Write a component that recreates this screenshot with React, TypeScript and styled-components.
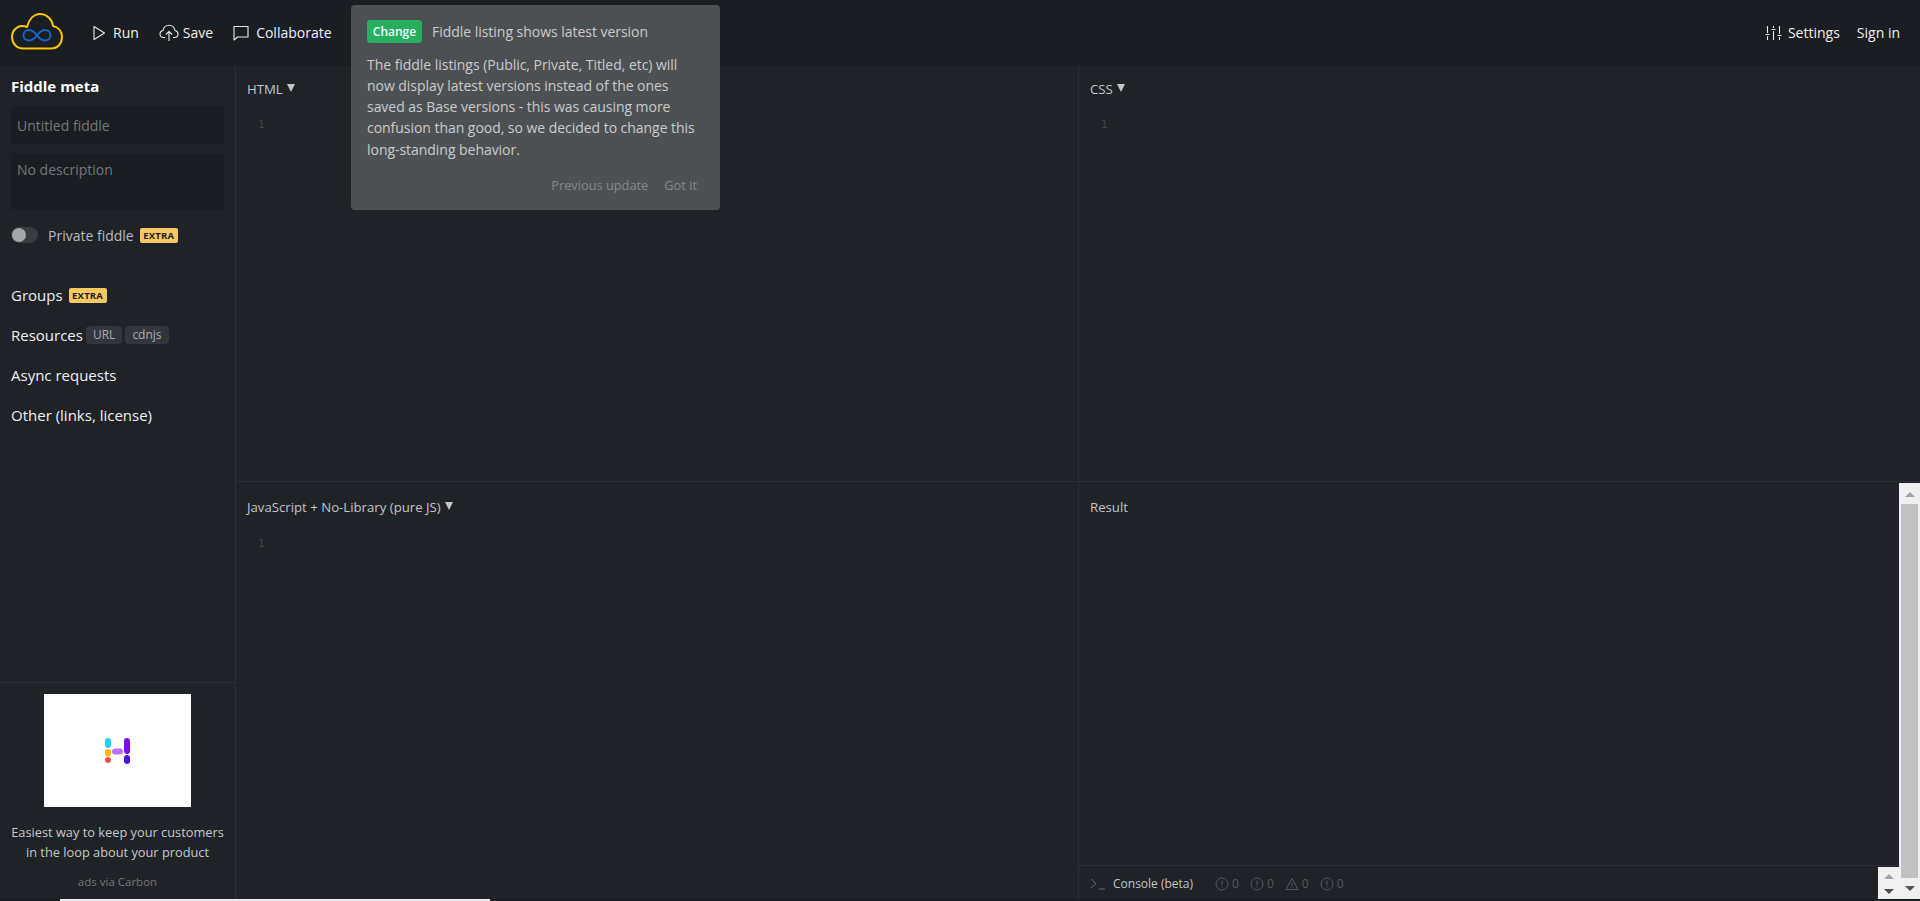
import React from "react"
import styled, { createGlobalStyle } from "styled-components"

const GlobalStyle = createGlobalStyle`
  html, body {
    margin: 0;
    padding: 0;
    height: 100%;
    overflow: hidden;
    background: #1f2227;
    font-family: "Open Sans", "Liberation Sans", sans-serif;
  }
  * {
    box-sizing: border-box;
  }
`

const Page = styled.div`
  position: relative;
  width: 1920px;
  height: 901px;
  display: flex;
  flex-direction: column;
  overflow: hidden;
  background: #1f2227;
`
const Header = styled.header`
  height: 66px;
  flex: none;
  display: flex;
  align-items: center;
  justify-content: space-between;
  padding: 0 20px 0 11px;
  background: #1a1d22;
`
const HeaderGroup = styled.nav`
  display: flex;
  align-items: center;
`
const Logo = styled.svg`
  width: 52px;
  height: 37px;
  margin: 0 29px 3px 0;
`
const NavItem = styled.a<{ $gap?: number; $left?: number }>`
  display: flex;
  align-items: center;
  gap: ${(p) => p.$gap ?? 7}px;
  margin-left: ${(p) => p.$left ?? 0}px;
  color: #f0f0f0;
  font-size: 14px;
  line-height: 20px;
  white-space: nowrap;
`
const Body = styled.div`
  flex: 1;
  min-height: 0;
  display: flex;
`
const Sidebar = styled.aside`
  width: 236px;
  flex: none;
  display: flex;
  flex-direction: column;
  border-right: 1px solid #2c2f35;
`
const Meta = styled.section`
  flex: 1;
  padding: 10px 11px 0;
`
const MetaTitle = styled.h3`
  margin: 0 0 10px;
  color: #ffffff;
  font-size: 15px;
  line-height: 20px;
  font-weight: 700;
`
const TextField = styled.div<{ $tall?: boolean }>`
  width: 213px;
  height: ${(p) => (p.$tall ? 57 : 38)}px;
  margin-bottom: ${(p) => (p.$tall ? 16 : 9)}px;
  padding: ${(p) => (p.$tall ? 7 : 10)}px 6px;
  background: #1a1d22;
  border-radius: 4px;
  color: #75787b;
  font-size: 14px;
  line-height: 20px;
`
const PrivateRow = styled.div`
  display: flex;
  align-items: center;
  height: 18px;
  margin-bottom: 41px;
  color: #b9bbbd;
  font-size: 14px;
`
const Toggle = styled.span`
  position: relative;
  width: 27px;
  height: 16px;
  margin-right: 10px;
  border-radius: 8px;
  background: #383b41;
  &::after {
    content: "";
    position: absolute;
    left: 1px;
    top: 1px;
    width: 14px;
    height: 14px;
    border-radius: 50%;
    background: #a5a6a8;
  }
`
const ExtraBadge = styled.span`
  display: inline-block;
  margin-left: 6px;
  padding: 0 3.5px;
  height: 15px;
  border-radius: 2px;
  background: #f5c862;
  color: #1f2227;
  font-size: 9.5px;
  line-height: 15px;
  font-weight: 700;
  letter-spacing: 0.2px;
`
const SectionLink = styled.div`
  display: flex;
  align-items: center;
  height: 20px;
  margin-bottom: 20px;
  color: #f0f0f0;
  font-size: 15px;
  line-height: 20px;
`
const SourceTag = styled.span`
  height: 18px;
  margin-left: 3px;
  padding: 0 7px;
  border-radius: 4px;
  background: #33363c;
  color: #a9abae;
  font-size: 12px;
  line-height: 18px;
`
const Ad = styled.section`
  height: 217px;
  flex: none;
  display: flex;
  flex-direction: column;
  align-items: center;
  padding-top: 11px;
  border-top: 1px solid #2c2f35;
`
const AdImage = styled.div`
  width: 147px;
  height: 113px;
  display: flex;
  align-items: center;
  justify-content: center;
  background: #ffffff;
`
const AdText = styled.p`
  margin: 15px 0 0;
  color: #c6c8ca;
  font-size: 12.8px;
  line-height: 20px;
  text-align: center;
`
const AdSource = styled.span`
  margin-top: 12px;
  color: #75787c;
  font-size: 11.5px;
  line-height: 16px;
`
const Editors = styled.main`
  flex: 1;
  display: grid;
  grid-template-columns: 843px 1fr;
  grid-template-rows: 416px 1fr;
`
const Panel = styled.section<{ $right?: boolean; $bottom?: boolean }>`
  position: relative;
  display: flex;
  flex-direction: column;
  border-right: ${(p) => (p.$right ? "0" : "1px solid #2c2f35")};
  border-bottom: ${(p) => (p.$bottom ? "0" : "1px solid #2c2f35")};
`
const PanelTitle = styled.div<{ $bottom?: boolean }>`
  display: flex;
  align-items: center;
  gap: 4px;
  height: 18px;
  margin: ${(p) => (p.$bottom ? 16 : 14)}px 0 0 11px;
  color: #c3c5c7;
  font-size: 13.2px;
  line-height: 18px;
`
const Caret = styled.span`
  width: 0;
  height: 0;
  margin-bottom: 3px;
  border-left: 4.5px solid transparent;
  border-right: 4.5px solid transparent;
  border-top: 8px solid #c3c5c7;
`
const LineNumber = styled.div<{ $bottom?: boolean }>`
  margin: ${(p) => (p.$bottom ? 20 : 19)}px 0 0 22px;
  color: #43464b;
  font-family: "DejaVu Sans Mono", "Liberation Mono", monospace;
  font-size: 11px;
  line-height: 16px;
`
const ConsoleBar = styled.div`
  margin-top: auto;
  height: 34px;
  display: flex;
  align-items: center;
  padding: 2px 0 0 11px;
  border-top: 1px solid #2c2f35;
  color: #b9bbbd;
  font-size: 12px;
`
const ConsoleLabel = styled.span`
  margin: 0 22px 0 7px;
  color: #c3c5c7;
`
const Counter = styled.span`
  display: flex;
  align-items: center;
  gap: 3px;
  margin-right: 11px;
  color: #55585c;
  font-size: 12px;
`
const BottomStrip = styled.div`
  height: 2px;
  flex: none;
  background: #1a1d22;
  &::after {
    content: "";
    display: block;
    width: 430px;
    height: 2px;
    margin-left: 60px;
    background: #eeeeee;
  }
`
const Scrollbar = styled.div`
  position: absolute;
  top: 483px;
  right: 0;
  width: 21px;
  height: 416px;
  display: flex;
  flex-direction: column;
  align-items: center;
  padding-top: 9px;
  background: #f0f0f0;
`
const ThumbArrow = styled.span<{ $down?: boolean; $dim?: boolean }>`
  width: 0;
  height: 0;
  border-left: 5px solid transparent;
  border-right: 5px solid transparent;
  ${(p) =>
    p.$down
      ? `border-top: 5px solid ${p.$dim ? "#a3a3a3" : "#505050"};`
      : `border-bottom: 5px solid ${p.$dim ? "#a3a3a3" : "#505050"};`}
`
const ScrollThumb = styled.div`
  width: 17px;
  height: 374px;
  margin: 7px 0 8px;
  background: #c1c1c1;
`
const ScrollCorner = styled.div`
  position: absolute;
  right: 0;
  bottom: 2px;
  width: 42px;
  height: 32px;
  display: flex;
  flex-direction: column;
  align-items: flex-start;
  gap: 10px;
  padding: 7px 0 0 6px;
  background: #f0f0f0;
`
const Notice = styled.aside`
  position: absolute;
  left: 351px;
  top: 5px;
  width: 369px;
  height: 205px;
  padding: 15px 23px 15px 16px;
  border-radius: 4px;
  background: rgba(90, 94, 96, 0.8);
`
const NoticeHead = styled.div`
  display: flex;
  align-items: center;
  gap: 10px;
  height: 23px;
  color: #c9cbcc;
  font-size: 14px;
  letter-spacing: -0.03px;
`
const ChangeBadge = styled.span`
  width: 55px;
  height: 23px;
  border-radius: 3px;
  background: #27ae60;
  color: #f2fff7;
  font-size: 12px;
  line-height: 23px;
  font-weight: 600;
  letter-spacing: 0;
  text-align: center;
`
const NoticeBody = styled.p`
  margin: 10.5px 0 0;
  color: #c9cbcc;
  font-size: 14px;
  line-height: 21.3px;
  letter-spacing: -0.04px;
  white-space: nowrap;
`
const NoticeActions = styled.div`
  display: flex;
  justify-content: flex-end;
  gap: 16px;
  margin-top: 15px;
  color: #85888a;
  font-size: 12.8px;
  line-height: 20px;
`

const iconProps = {
  fill: "none",
  stroke: "#e8e8e8",
  strokeWidth: 1.1,
}

function CircleAlert() {
  return (
    <svg width="14" height="14" viewBox="0 0 14 14" fill="none" stroke="#55585c" strokeWidth="1">
      <circle cx="7" cy="7" r="6" />
      <path d="M7 3.500v4.500M7 9.200v1.300" />
    </svg>
  )
}

export default function App() {
  return (
    <Page>
      <GlobalStyle />
      <Header>
        <HeaderGroup>
          <Logo viewBox="0 0 52 37" fill="none">
            <path
              d="M12 35.500C5.500 35.500 1 30 1 24 1 17.500 6 13 11 13c2 0 4 .5 5 1C18 6 23 1 29 1c7 0 12.500 6 13 12 5 1 9 5 9 11 0 6-4 11.500-11 11.500z"
              stroke="#f7c600"
              strokeWidth="2"
              strokeLinejoin="round"
            />
            <path
              d="M26 22.300C23.500 19 21 17 18 17c-3.500 0-5.500 2.500-5.500 5.300 0 2.700 2 5.200 5.500 5.200 3 0 5.500-2 8-5.200C28.500 19 31 17 34 17c3.500 0 5.500 2.500 5.500 5.300 0 2.700-2 5.200-5.500 5.200-3 0-5.500-2-8-5.200z"
              stroke="#1565c0"
              strokeWidth="2"
            />
          </Logo>
          <NavItem $gap={7}>
            <svg width="14" height="16" viewBox="0 0 14 16" {...iconProps}>
              <path d="M2 1.500v13l10.500-6.500z" strokeLinejoin="round" />
            </svg>
            Run
          </NavItem>
          <NavItem $left={20} $gap={4}>
            <svg width="20" height="18" viewBox="0 0 20 18" {...iconProps}>
              <path d="M6 13.500H4.500C2.500 13.500 1 12 1 10c0-1.800 1.200-3.200 3-3.500C4.500 3.500 7 1.200 10 1.200c3 0 5.500 2.300 6 5.300 1.800.3 3 1.700 3 3.500 0 2-1.500 3.500-3.500 3.500H14" />
              <path d="M10 17V7.500M6.800 10.500 10 7.500l3.200 3" />
            </svg>
            Save
          </NavItem>
          <NavItem $left={20} $gap={7}>
            <svg width="16" height="16" viewBox="0 0 16 16" {...iconProps}>
              <path d="M1 1.500h14v10.500H4.500L1 15z" strokeLinejoin="round" />
            </svg>
            Collaborate
          </NavItem>
        </HeaderGroup>
        <HeaderGroup>
          <NavItem $gap={6}>
            <svg width="17" height="16" viewBox="0 0 17 16" {...iconProps}>
              <path d="M2.500 1v7M2.500 11v4M8.500 1v2M8.500 6v9M14.500 1v8M14.500 12v3M.5 9.500h4M6.500 4.500h4M12.500 10.500h4" />
            </svg>
            Settings
          </NavItem>
          <NavItem $left={17}>Sign in</NavItem>
        </HeaderGroup>
      </Header>
      <Body>
        <Sidebar>
          <Meta>
            <MetaTitle>Fiddle meta</MetaTitle>
            <TextField>Untitled fiddle</TextField>
            <TextField $tall>No description</TextField>
            <PrivateRow>
              <Toggle />
              Private fiddle
              <ExtraBadge>EXTRA</ExtraBadge>
            </PrivateRow>
            <SectionLink>
              Groups
              <ExtraBadge>EXTRA</ExtraBadge>
            </SectionLink>
            <SectionLink>
              Resources
              <SourceTag>URL</SourceTag>
              <SourceTag>cdnjs</SourceTag>
            </SectionLink>
            <SectionLink>Async requests</SectionLink>
            <SectionLink>Other (links, license)</SectionLink>
          </Meta>
          <Ad>
            <AdImage>
              <svg width="27" height="27" viewBox="0 0 27 27">
                <rect x="1" y="1" width="6" height="10" rx="3" fill="#25d0f5" />
                <rect x="1" y="12" width="6" height="7.500" rx="3" fill="#ffb814" />
                <circle cx="4" cy="23" r="3" fill="#fb4d4d" />
                <rect x="8" y="11.500" width="11" height="6" rx="3" fill="#b873f5" />
                <rect x="20" y="1" width="6" height="16" rx="3" fill="#7a0de8" />
                <rect x="20" y="18" width="6" height="9" rx="3" fill="#4d12e0" />
              </svg>
            </AdImage>
            <AdText>
              Easiest way to keep your customers
              <br />
              in the loop about your product
            </AdText>
            <AdSource>ads via Carbon</AdSource>
          </Ad>
        </Sidebar>
        <Editors>
          <Panel>
            <PanelTitle>
              HTML
              <Caret />
            </PanelTitle>
            <LineNumber>1</LineNumber>
          </Panel>
          <Panel $right>
            <PanelTitle>
              CSS
              <Caret />
            </PanelTitle>
            <LineNumber>1</LineNumber>
          </Panel>
          <Panel $bottom>
            <PanelTitle $bottom>
              JavaScript + No-Library (pure JS)
              <Caret />
            </PanelTitle>
            <LineNumber $bottom>1</LineNumber>
          </Panel>
          <Panel $right $bottom>
            <PanelTitle $bottom>Result</PanelTitle>
            <ConsoleBar>
              <svg width="16" height="12" viewBox="0 0 16 12" fill="none" stroke="#6a6d71" strokeWidth="1">
                <path d="M1 1l5 4.500L1 10M9 11h6" />
              </svg>
              <ConsoleLabel>Console (beta)</ConsoleLabel>
              <Counter>
                <CircleAlert />0
              </Counter>
              <Counter>
                <CircleAlert />0
              </Counter>
              <Counter>
                <svg width="14" height="14" viewBox="0 0 14 14" fill="none" stroke="#55585c" strokeWidth="1">
                  <path d="M7 1.500 13 12.500H1zM7 5.500v3.500M7 10v1" />
                </svg>
                0
              </Counter>
              <Counter>
                <CircleAlert />0
              </Counter>
            </ConsoleBar>
          </Panel>
        </Editors>
      </Body>
      <BottomStrip />
      <Notice>
        <NoticeHead>
          <ChangeBadge>Change</ChangeBadge>
          Fiddle listing shows latest version
        </NoticeHead>
        <NoticeBody>
          The fiddle listings (Public, Private, Titled, etc) will
          <br />
          now display latest versions instead of the ones
          <br />
          saved as Base versions - this was causing more
          <br />
          confusion than good, so we decided to change this
          <br />
          long-standing behavior.
        </NoticeBody>
        <NoticeActions>
          <span>Previous update</span>
          <span>Got it</span>
        </NoticeActions>
      </Notice>
      <ScrollCorner>
        <ThumbArrow $dim />
        <ThumbArrow $down />
      </ScrollCorner>
      <Scrollbar>
        <ThumbArrow $dim />
        <ScrollThumb />
        <ThumbArrow $down />
      </Scrollbar>
    </Page>
  )
}
